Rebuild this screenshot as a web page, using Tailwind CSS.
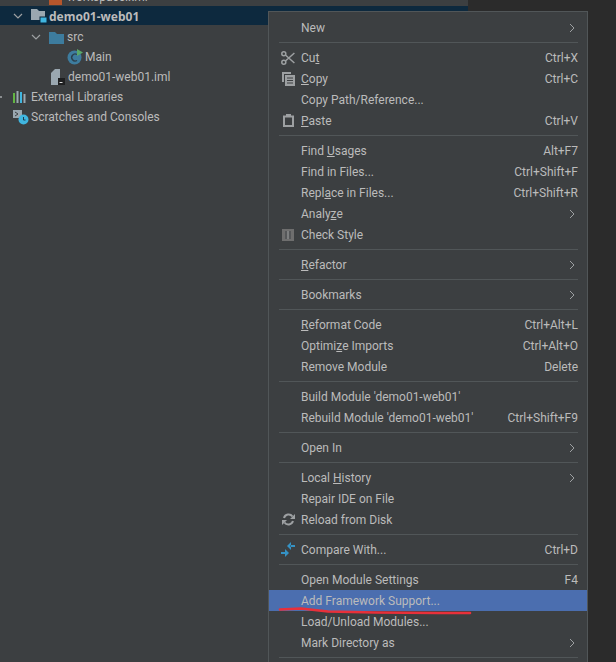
<!DOCTYPE html>
<html lang="en">

<head>
    <meta charset="UTF-8">
    <script src="https://cdn.jsdelivr.net/npm/@tailwindcss/browser@4"></script>
    <title>Project menu</title>
</head>

<body class="w-[616px] h-[662px] overflow-hidden bg-[#3c3f41] font-['Roboto',sans-serif] text-[12px] text-[#bbbbbb]">

    <div class="relative w-[616px] h-[662px] overflow-hidden">

        <!-- Editor side -->
        <div class="absolute left-[468px] top-0 w-[148px] h-[662px] bg-[#2b2b2b]"></div>

        <!-- Project tree -->
        <div class="w-[468px]">
            <div class="h-[6px] overflow-hidden relative">
                <div class="absolute left-[49px] -top-[8px] w-[13px] h-[13px] bg-[#b5562c]"></div>
                <span class="absolute left-[67px] -top-[13px] leading-[20px]">workspace.xml</span>
            </div>
            <div class="h-[19px] bg-[#0d293e] flex items-center">
                <svg class="ml-[13px] w-[10px] h-[10px]" viewBox="0 0 10 10" fill="none" stroke="#9da0a2" stroke-width="1.2"><path d="M1 3l4 4 4-4" /></svg>
                <svg class="ml-[8px] w-[16px] h-[16px]" viewBox="0 0 16 16"><path d="M0 1h6l2 2h6v9H0z" fill="#9aa7b0" /><rect x="9" y="9" width="7" height="6" fill="#40b6e0" stroke="#0d293e" /></svg>
                <span class="ml-[2px] mt-[2px] font-['Noto_Sans',sans-serif] font-bold">demo01-web01</span>
            </div>
            <div class="mt-[2px] h-[20px] flex items-center pl-[31px]">
                <svg class="w-[10px] h-[10px]" viewBox="0 0 10 10" fill="none" stroke="#9da0a2" stroke-width="1.2"><path d="M1 3l4 4 4-4" /></svg>
                <svg class="ml-[8px] w-[15px] h-[13px]" viewBox="0 0 15 13"><path d="M0 1h6l2 2h7v10H0z" fill="#3d7c9e" /></svg>
                <span class="ml-[3px]">src</span>
            </div>
            <div class="h-[20px] flex items-center pl-[67px]">
                <svg class="w-[16px] h-[16px]" viewBox="0 0 16 16"><circle cx="7.5" cy="8.5" r="7" fill="#3d7c9e" /><path d="M10 5.5a3.5 3.5 0 1 0 0 6" fill="none" stroke="#2b3f4c" stroke-width="1.4" /><path d="M10 0l6 3.5-6 3.5z" fill="#59a869" /></svg>
                <span class="ml-[2px]">Main</span>
            </div>
            <div class="h-[20px] flex items-center pl-[51px]">
                <svg class="w-[14px] h-[16px]" viewBox="0 0 14 16"><path d="M0 4l4-4h5v16H0z" fill="#9aa7b0" /><rect x="7" y="9" width="7" height="7" fill="#1e1f20" /><rect x="8.5" y="13" width="3" height="1" fill="#dddddd" /></svg>
                <span class="ml-[3px]">demo01-web01.iml</span>
            </div>
            <div class="h-[20px] flex items-center pl-[13px] relative">
                <span class="absolute left-0 top-[9px] w-[2px] h-[2px] bg-[#8a8d8f]"></span>
                <svg class="w-[14px] h-[14px]" viewBox="0 0 14 14"><rect x="0" y="3" width="2" height="10" fill="#62b543" /><rect x="3.5" y="1" width="2" height="12" fill="#9aa7b0" /><rect x="7" y="2" width="2" height="11" fill="#40b6e0" /><rect x="10.5" y="4" width="2" height="9" fill="#9aa7b0" /></svg>
                <span class="ml-[4px]">External Libraries</span>
            </div>
            <div class="h-[20px] flex items-center pl-[13px]">
                <svg class="w-[16px] h-[16px]" viewBox="0 0 16 16"><path d="M0 1h9v8H0z" fill="#9aa7b0" /><path d="M2 3l3 2-3 2" fill="none" stroke="#3c3f41" /><circle cx="10.5" cy="10.5" r="5" fill="#40b6e0" /><path d="M10.5 8v3h2" fill="none" stroke="#1f3a4a" /></svg>
                <span class="ml-[2px]">Scratches and Consoles</span>
            </div>
        </div>

        <!-- Context menu -->
        <div class="absolute left-[268px] top-[11px] w-[320px] h-[660px] bg-[#3c3f41] border border-[#515658] pt-[5px]">
            <div class="h-[21px] pl-[10px] pr-[9px] flex items-center"><span class="w-[22px]"></span><span>New</span><svg class="ml-auto w-[7px] h-[10px] mr-[2px]" viewBox="0 0 7 10" fill="none" stroke="#9da0a2"><path d="M1 1l4 4-4 4" /></svg></div>
            <div class="h-[9px] pt-[4px] pl-[10px] pr-[9px]"><div class="h-px bg-[#515658]"></div></div>

            <div class="h-[21px] pl-[10px] pr-[9px] flex items-center">
                <span class="w-[22px] pl-[2px]"><svg class="w-[14px] h-[14px]" viewBox="0 0 14 14" fill="none" stroke="#9da0a2" stroke-width="1.5"><circle cx="2.8" cy="2.8" r="2" /><circle cx="2.8" cy="11.2" r="2" /><path d="M4.4 4l9 8M4.4 10l9-8" /></svg></span>
                <span>Cu<u>t</u></span><span class="ml-auto">Ctrl+X</span>
            </div>
            <div class="h-[21px] pl-[10px] pr-[9px] flex items-center">
                <span class="w-[22px] pl-[3px]"><svg class="w-[13px] h-[14px]" viewBox="0 0 13 14"><path d="M0 0h2v10H0zM0 0h9v2H0z" fill="#9da0a2" /><path d="M3 3h10v11H3z" fill="#9da0a2" /><path d="M5 6h6M5 8.5h6M5 11h6" stroke="#3c3f41" /></svg></span>
                <span><u>C</u>opy</span><span class="ml-auto">Ctrl+C</span>
            </div>
            <div class="h-[21px] pl-[10px] pr-[9px] flex items-center"><span class="w-[22px]"></span><span>Copy Path/Reference...</span></div>
            <div class="h-[21px] pl-[10px] pr-[9px] flex items-center">
                <span class="w-[22px] pl-[4px]"><svg class="w-[11px] h-[13px]" viewBox="0 0 11 13" fill="none"><rect x="1" y="2.5" width="9" height="9.5" stroke="#9da0a2" stroke-width="2" /><rect x="3" y="0" width="5" height="3" fill="#9da0a2" /></svg></span>
                <span><u>P</u>aste</span><span class="ml-auto">Ctrl+V</span>
            </div>
            <div class="h-[9px] pt-[4px] pl-[10px] pr-[9px]"><div class="h-px bg-[#515658]"></div></div>

            <div class="h-[21px] pl-[10px] pr-[9px] flex items-center"><span class="w-[22px]"></span><span>Find <u>U</u>sages</span><span class="ml-auto">Alt+F7</span></div>
            <div class="h-[21px] pl-[10px] pr-[9px] flex items-center"><span class="w-[22px]"></span><span>Find in Files...</span><span class="ml-auto">Ctrl+Shift+F</span></div>
            <div class="h-[21px] pl-[10px] pr-[9px] flex items-center"><span class="w-[22px]"></span><span>Repl<u>a</u>ce in Files...</span><span class="ml-auto">Ctrl+Shift+R</span></div>
            <div class="h-[21px] pl-[10px] pr-[9px] flex items-center"><span class="w-[22px]"></span><span>Analy<u>z</u>e</span><svg class="ml-auto w-[7px] h-[10px] mr-[2px]" viewBox="0 0 7 10" fill="none" stroke="#9da0a2"><path d="M1 1l4 4-4 4" /></svg></div>
            <div class="h-[21px] pl-[10px] pr-[9px] flex items-center">
                <span class="w-[22px] pl-[3px]"><svg class="w-[12px] h-[12px]" viewBox="0 0 12 12"><rect width="12" height="12" fill="#6e6e6e" /><rect x="3" y="2" width="6" height="8" fill="#555759" /><rect x="5" y="2" width="2" height="8" fill="#7d7f80" /></svg></span>
                <span>Check Style</span>
            </div>
            <div class="h-[9px] pt-[4px] pl-[10px] pr-[9px]"><div class="h-px bg-[#515658]"></div></div>

            <div class="h-[21px] pl-[10px] pr-[9px] flex items-center"><span class="w-[22px]"></span><span><u>R</u>efactor</span><svg class="ml-auto w-[7px] h-[10px] mr-[2px]" viewBox="0 0 7 10" fill="none" stroke="#9da0a2"><path d="M1 1l4 4-4 4" /></svg></div>
            <div class="h-[9px] pt-[4px] pl-[10px] pr-[9px]"><div class="h-px bg-[#515658]"></div></div>

            <div class="h-[21px] pl-[10px] pr-[9px] flex items-center"><span class="w-[22px]"></span><span>Bookmarks</span><svg class="ml-auto w-[7px] h-[10px] mr-[2px]" viewBox="0 0 7 10" fill="none" stroke="#9da0a2"><path d="M1 1l4 4-4 4" /></svg></div>
            <div class="h-[9px] pt-[4px] pl-[10px] pr-[9px]"><div class="h-px bg-[#515658]"></div></div>

            <div class="h-[21px] pl-[10px] pr-[9px] flex items-center"><span class="w-[22px]"></span><span><u>R</u>eformat Code</span><span class="ml-auto">Ctrl+Alt+L</span></div>
            <div class="h-[21px] pl-[10px] pr-[9px] flex items-center"><span class="w-[22px]"></span><span>Optimi<u>z</u>e Imports</span><span class="ml-auto">Ctrl+Alt+O</span></div>
            <div class="h-[21px] pl-[10px] pr-[9px] flex items-center"><span class="w-[22px]"></span><span>Remove Module</span><span class="ml-auto">Delete</span></div>
            <div class="h-[9px] pt-[4px] pl-[10px] pr-[9px]"><div class="h-px bg-[#515658]"></div></div>

            <div class="h-[21px] pl-[10px] pr-[9px] flex items-center"><span class="w-[22px]"></span><span>Build Module 'demo01-web01'</span></div>
            <div class="h-[21px] pl-[10px] pr-[9px] flex items-center"><span class="w-[22px]"></span><span>Rebuild Module 'demo01-web01'</span><span class="ml-auto">Ctrl+Shift+F9</span></div>
            <div class="h-[9px] pt-[4px] pl-[10px] pr-[9px]"><div class="h-px bg-[#515658]"></div></div>

            <div class="h-[21px] pl-[10px] pr-[9px] flex items-center"><span class="w-[22px]"></span><span>Open In</span><svg class="ml-auto w-[7px] h-[10px] mr-[2px]" viewBox="0 0 7 10" fill="none" stroke="#9da0a2"><path d="M1 1l4 4-4 4" /></svg></div>
            <div class="h-[9px] pt-[4px] pl-[10px] pr-[9px]"><div class="h-px bg-[#515658]"></div></div>

            <div class="h-[21px] pl-[10px] pr-[9px] flex items-center"><span class="w-[22px]"></span><span>Local <u>H</u>istory</span><svg class="ml-auto w-[7px] h-[10px] mr-[2px]" viewBox="0 0 7 10" fill="none" stroke="#9da0a2"><path d="M1 1l4 4-4 4" /></svg></div>
            <div class="h-[21px] pl-[10px] pr-[9px] flex items-center"><span class="w-[22px]"></span><span>Repair IDE on File</span></div>
            <div class="h-[21px] pl-[10px] pr-[9px] flex items-center">
                <span class="w-[22px] pl-[3px]"><svg class="w-[13px] h-[13px]" viewBox="0 0 13 13" fill="none" stroke="#9da0a2" stroke-width="2"><path d="M2 5a4.8 4.8 0 0 1 8.5-1.5M11 8a4.8 4.8 0 0 1-8.5 1.5" /><path d="M13 1v5H8zM0 12V7h5z" fill="#9da0a2" stroke="none" /></svg></span>
                <span>Reload from Disk</span>
            </div>
            <div class="h-[9px] pt-[4px] pl-[10px] pr-[9px]"><div class="h-px bg-[#515658]"></div></div>

            <div class="h-[21px] pl-[10px] pr-[9px] flex items-center">
                <span class="w-[22px] pl-[2px]"><svg class="w-[14px] h-[15px]" viewBox="0 0 14 15"><path d="M0 10h4.5v2H0zM4 7l4 4-4 4z" fill="#3592c4" /><path d="M9.5 3H14v2H9.5zM10 0l-4 4 4 4z" fill="#3592c4" /></svg></span>
                <span>Compare With...</span><span class="ml-auto">Ctrl+D</span>
            </div>
            <div class="h-[9px] pt-[4px] pl-[10px] pr-[9px]"><div class="h-px bg-[#515658]"></div></div>

            <div class="h-[21px] pl-[10px] pr-[9px] flex items-center"><span class="w-[22px]"></span><span>Open Module Settings</span><span class="ml-auto">F4</span></div>
            <div class="h-[21px] pl-[10px] pr-[9px] flex items-center bg-[#4b6eaf]"><span class="w-[22px]"></span><span>Add Framework Support...</span></div>
            <div class="h-[21px] pl-[10px] pr-[9px] flex items-center"><span class="w-[22px]"></span><span>Load/Unload Modules...</span></div>
            <div class="h-[21px] pl-[10px] pr-[9px] flex items-center"><span class="w-[22px]"></span><span>Mark Directory as</span><svg class="ml-auto w-[7px] h-[10px] mr-[2px]" viewBox="0 0 7 10" fill="none" stroke="#9da0a2"><path d="M1 1l4 4-4 4" /></svg></div>
            <div class="h-[9px] pt-[4px] pl-[10px] pr-[9px]"><div class="h-px bg-[#515658]"></div></div>
        </div>

        <!-- Red annotation under the highlighted row -->
        <svg class="absolute left-0 top-0 w-[616px] h-[662px] pointer-events-none" viewBox="0 0 616 662" fill="none" stroke="#e8303a" stroke-width="2.6" stroke-linecap="round"><path d="M280 609.5L301 608.5L328 611.5L375 612.5L438 613L470 613" /></svg>
    </div>

</body>

</html>
